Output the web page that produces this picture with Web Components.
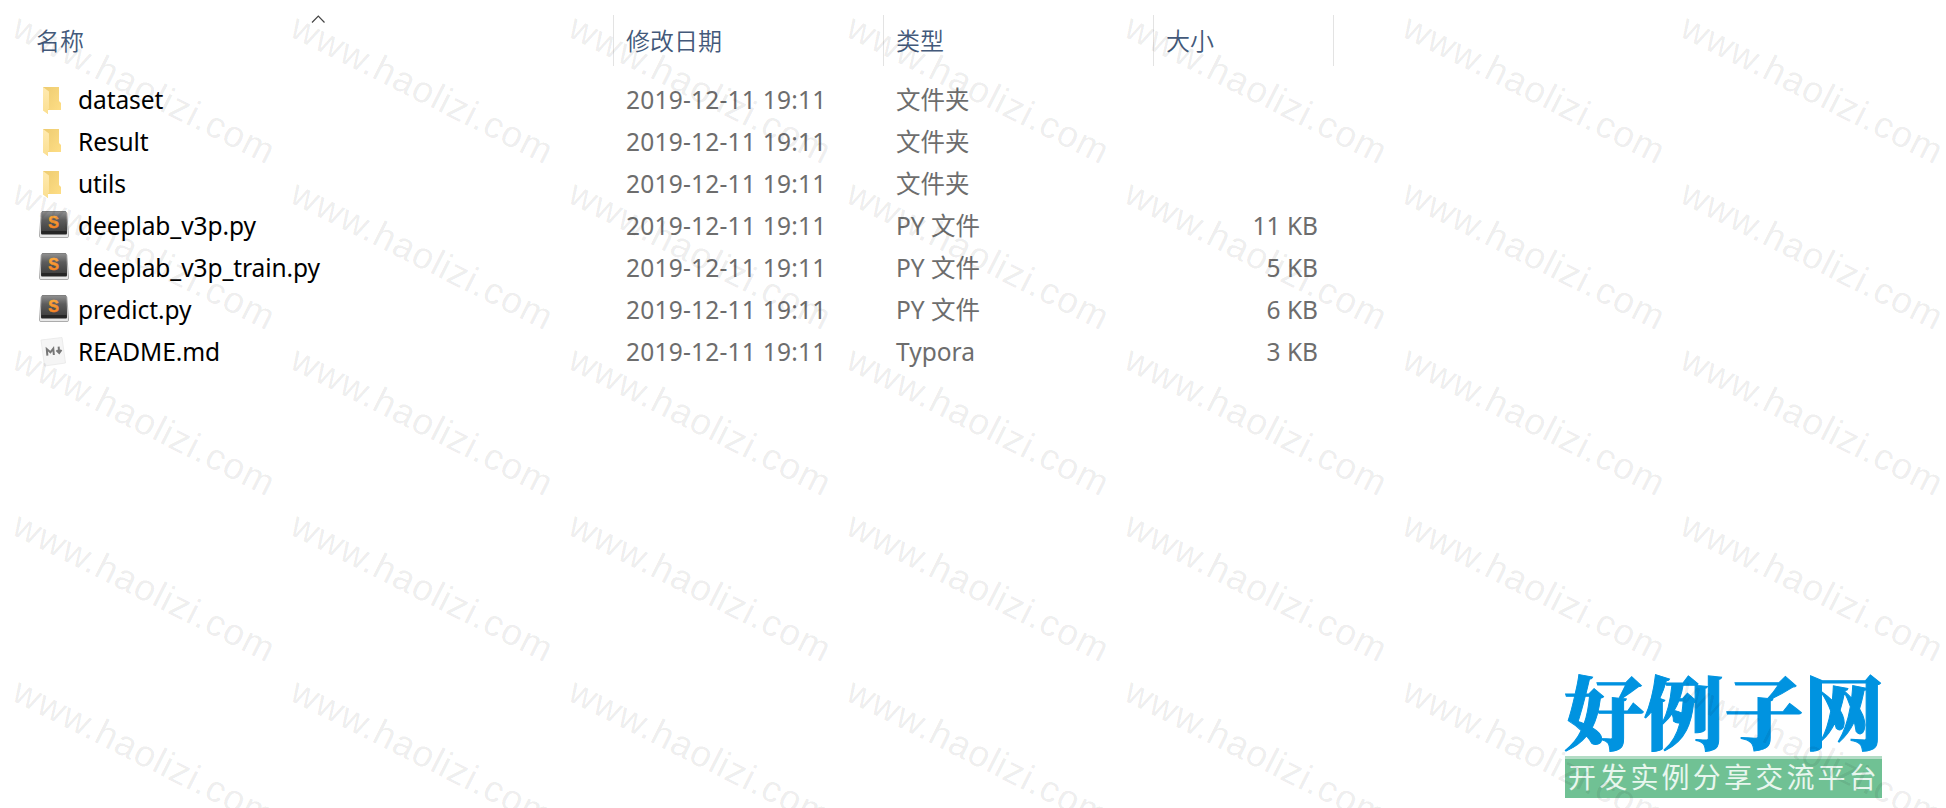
<!DOCTYPE html>
<html lang="zh-CN">
<head>
<meta charset="utf-8">
<title>文件列表</title>
<style>
    body {
        margin: 0;
        width: 1946px;
        height: 808px;
        overflow: hidden;
        position: relative;
        background: #fff;
        font-family: "Noto Sans", "Noto Sans CJK SC", sans-serif;
        font-size: 24px;
    }
</style>
</head>
<body>
<file-list>
    <file-row icon="folder" name="dataset" date="2019-12-11 19:11" type="文件夹"></file-row>
    <file-row icon="folder" name="Result" date="2019-12-11 19:11" type="文件夹"></file-row>
    <file-row icon="folder" name="utils" date="2019-12-11 19:11" type="文件夹"></file-row>
    <file-row icon="sublime" name="deeplab_v3p.py" date="2019-12-11 19:11" type="PY 文件" size="11 KB"></file-row>
    <file-row icon="sublime" name="deeplab_v3p_train.py" date="2019-12-11 19:11" type="PY 文件" size="5 KB"></file-row>
    <file-row icon="sublime" name="predict.py" date="2019-12-11 19:11" type="PY 文件" size="6 KB"></file-row>
    <file-row icon="markdown" name="README.md" date="2019-12-11 19:11" type="Typora" size="3 KB"></file-row>
</file-list>
<site-logo>
    <span slot="title">好例子网</span>
    <span slot="tagline">开发实例分享交流平台</span>
</site-logo>
<water-mark text="www.haolizi.com"></water-mark>

<script>
const ICONS = {
    folder: `
        <defs>
            <linearGradient id="back" x1="0" y1="0" x2="1" y2="1">
                <stop offset="0" stop-color="#edcb70"/><stop offset="1" stop-color="#ffdf87"/>
            </linearGradient>
            <linearGradient id="flap" x1="0" y1="0" x2="0" y2="1">
                <stop offset="0" stop-color="#ffeab0"/><stop offset="1" stop-color="#fbdf91"/>
            </linearGradient>
        </defs>
        <path d="M4 8H20V22L22 24V31H9V35L4 31Z" fill="url(#back)"/>
        <path d="M4 8L10 12.500V30H9V35L4 31.500Z" fill="url(#flap)"/>`,
    sublime: `
        <defs>
            <linearGradient id="key" x1="0" y1="0" x2="0" y2="1">
                <stop offset="0" stop-color="#929292"/><stop offset=".45" stop-color="#5c5c5c"/><stop offset="1" stop-color="#424242"/>
            </linearGradient>
            <linearGradient id="glow" x1="0" y1="0" x2="0" y2="1">
                <stop offset="0" stop-color="#ffb13f"/><stop offset="1" stop-color="#f47b20"/>
            </linearGradient>
        </defs>
        <path d="M4 6.500H26Q27.500 6.500 27.800 8L29.500 30V31.500Q29.500 32.500 28 32.500H2Q.5 32.500 .5 31.500V30L2.200 8Q2.500 6.500 4 6.500Z" fill="#e8e8e8" stroke="#999" stroke-width=".8"/>
        <path d="M4 6.300H26Q27 6.300 27.200 8L28 28Q28 29.500 27 29.500H3Q2 29.500 2 28L2.800 8Q3 6.300 4 6.300Z" fill="#262626"/>
        <path d="M4 6.300H26Q27 6.300 27.200 8L27.800 26H2.200L2.800 8Q3 6.300 4 6.300Z" fill="url(#key)"/>
        <text x="14.500" y="22.500" text-anchor="middle" font-family="Liberation Sans, sans-serif" font-size="16" font-weight="bold" fill="url(#glow)" stroke="url(#glow)" stroke-width=".5">S</text>`,
    markdown: `
        <path d="M2 9L23 6.500L26.500 32L5.500 35Z" fill="#f5f5f5" stroke="#e9e9e9" stroke-width=".8"/>
        <g transform="rotate(-5 15 20)" fill="none" stroke="#777" stroke-width="2">
            <path d="M8 24V17.500L11.300 21L14.500 17.500V24"/>
            <path d="M20 16V22M17.500 19.500L20 22.500L22.500 19.500"/>
        </g>`
};

const COLUMNS = 'grid-template-columns: 613px 270px 270px 180px 1fr;';

class FileList extends HTMLElement {
    constructor() {
        super();
        this.attachShadow({ mode: "open" });
    }

    connectedCallback() {
        this.shadowRoot.innerHTML = `
            <style>
                :host {
                    display: block;
                    padding-top: 15px;
                }
                .header {
                    display: grid;
                    ${COLUMNS}
                    height: 51px;
                    margin-bottom: 13px;
                    line-height: 50px;
                    color: #43597a;
                    font-family: "Noto Sans CJK SC", sans-serif;
                    font-weight: 350;
                }
                .header > div {
                    padding-left: 12px;
                    border-left: 1px solid #e3e3e3;
                }
                .header > .name {
                    display: flex;
                    padding-left: 36px;
                    border: 0;
                }
                .sort {
                    width: 14px;
                    height: 8px;
                    margin-left: 227px;
                }
            </style>
            <div class="header">
                <div class="name"><span>名称</span>
                    <svg class="sort" viewBox="0 0 14 8" fill="none" stroke="#444" stroke-width="1.200"><path d="M1 7.500L7.300 1.200L13.500 7.500"/></svg>
                </div>
                <div>修改日期</div>
                <div>类型</div>
                <div>大小</div>
                <div></div>
            </div>
            <slot></slot>
        `;
    }
}

class FileRow extends HTMLElement {
    constructor() {
        super();
        this.attachShadow({ mode: "open" });
    }

    connectedCallback() {
        this.shadowRoot.innerHTML = `
            <style>
                :host {
                    display: grid;
                    ${COLUMNS}
                    height: 42px;
                    line-height: 42px;
                    font-size: 24.5px;
                    color: #6d6d6d;
                    white-space: nowrap;
                }
                .name {
                    display: flex;
                    padding-left: 39px;
                    letter-spacing: -0.08px;
                    color: #000;
                }
                svg {
                    width: 32px;
                    height: 42px;
                    margin-right: 7px;
                }
                .date, .type {
                    padding-left: 13px;
                }
                .date {
                    letter-spacing: 0.22px;
                }
                .size {
                    padding-right: 15px;
                    text-align: right;
                }
            </style>
            <div class="name">
                <svg viewBox="0 0 32 42">${ICONS[this.getAttribute('icon')]}</svg>
                <span>${this.getAttribute('name')}</span>
            </div>
            <div class="date">${this.getAttribute('date')}</div>
            <div class="type">${this.getAttribute('type')}</div>
            <div class="size">${this.getAttribute('size') || ''}</div>
        `;
    }
}

class SiteLogo extends HTMLElement {
    constructor() {
        super();
        this.attachShadow({ mode: "open" });
    }

    connectedCallback() {
        this.shadowRoot.innerHTML = `
            <style>
                :host {
                    display: block;
                    position: absolute;
                    left: 1565px;
                    top: 665px;
                    width: 317px;
                    font-family: "Noto Serif CJK SC", "Noto Sans CJK SC", sans-serif;
                    white-space: nowrap;
                }
                .title {
                    height: 91px;
                    margin-left: -1px;
                    line-height: 88px;
                    font-size: 80px;
                    font-weight: 900;
                    color: #0093e0;
                    -webkit-text-stroke: 1px #0093e0;
                }
                .tagline {
                    box-sizing: border-box;
                    height: 42px;
                    padding-left: 3px;
                    border-top: 3px solid #b2dcc5;
                    background: #70c194;
                    font: 28px/35px "Noto Sans CJK SC", sans-serif;
                    letter-spacing: 3.2px;
                    color: #e8f6ee;
                }
            </style>
            <div class="title"><slot name="title"></slot></div>
            <div class="tagline"><slot name="tagline"></slot></div>
        `;
    }
}

class WaterMark extends HTMLElement {
    constructor() {
        super();
        this.attachShadow({ mode: "open" });
    }

    connectedCallback() {
        let marks = '';
        for (let row = 0; row < 5; row++) {
            for (let col = 0; col < 7; col++) {
                marks += `<text transform="translate(${10 + col * 278} ${35.5 + row * 166}) rotate(26.7)">${this.getAttribute('text')}</text>`;
            }
        }
        this.shadowRoot.innerHTML = `
            <style>
                :host {
                    display: block;
                    position: absolute;
                    inset: 0;
                    pointer-events: none;
                }
                text {
                    font: 37px "Liberation Sans", Arial, sans-serif;
                    letter-spacing: 1px;
                    fill: rgba(0, 0, 0, 0.08);
                    stroke: rgba(0, 0, 0, 0.03);
                    stroke-width: 0.5px;
                }
            </style>
            <svg width="1946" height="808">${marks}</svg>
        `;
    }
}

customElements.define('file-list', FileList);
customElements.define('file-row', FileRow);
customElements.define('site-logo', SiteLogo);
customElements.define('water-mark', WaterMark);
</script>
</body>
</html>
